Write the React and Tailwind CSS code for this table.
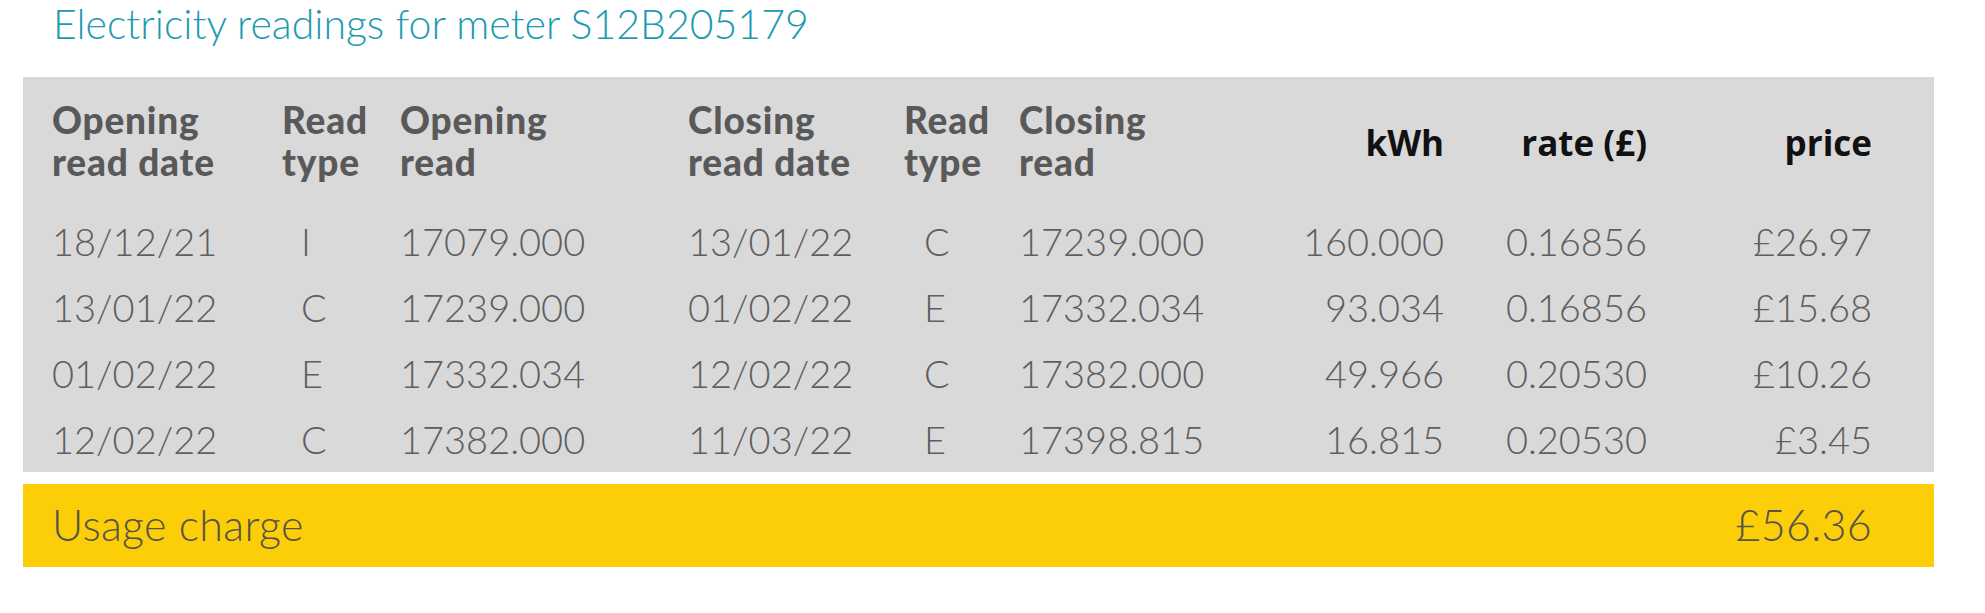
import React from "react";

const rows = [
  ["18/12/21", "I", "17079.000", "13/01/22", "C", "17239.000", "160.000", "0.16856", "£26.97"],
  ["13/01/22", "C", "17239.000", "01/02/22", "E", "17332.034", "93.034", "0.16856", "£15.68"],
  ["01/02/22", "E", "17332.034", "12/02/22", "C", "17382.000", "49.966", "0.20530", "£10.26"],
  ["12/02/22", "C", "17382.000", "11/03/22", "E", "17398.815", "16.815", "0.20530", "£3.45"],
];

const grid =
  "grid grid-cols-[230px_118px_288px_216px_115px_250px_175px_203px_225px]";

function Head({ l1, l2 }) {
  return (
    <div
      className="font-black text-[37px] leading-[42px] tracking-[0.8px] text-[#595959] whitespace-nowrap"
      style={{ fontFamily: "Lato, sans-serif" }}
    >
      <div>{l1}</div>
      <div>{l2}</div>
    </div>
  );
}

function RHead({ children }) {
  return (
    <div
      className="self-center pt-[4px] text-right font-bold text-[35px] text-[#111111]"
      style={{ fontFamily: "'Open Sans', sans-serif" }}
    >
      {children}
    </div>
  );
}

export default function App() {
  return (
    <div className="w-[1985px] h-[613px] bg-white" style={{ fontFamily: "Lato, sans-serif" }}>
      <div className="pl-[53px] text-[41px] leading-[48px] text-[#1d9ab2] font-light">
        Electricity readings for meter S12B205179
      </div>
      <div className="mt-[29px] ml-[23px] w-[1911px] h-[395px] bg-[#d9d9d9] pl-[29px] pr-[62px] pt-[22px]">
        <div className={grid}>
          <Head l1="Opening" l2="read date" />
          <Head l1="Read" l2="type" />
          <Head l1="Opening" l2="read" />
          <Head l1="Closing" l2="read date" />
          <Head l1="Read" l2="type" />
          <Head l1="Closing" l2="read" />
          <RHead>kWh</RHead>
          <RHead>rate (£)</RHead>
          <RHead>price</RHead>
        </div>
        <div className="mt-[25px]">
          {rows.map((r, i) => (
            <div key={i} className={`${grid} h-[66px] items-center text-[38px] leading-[66px] text-[#5e5e5e] font-light`}>
              <div>{r[0]}</div>
              <div className="pl-[19px]">{r[1]}</div>
              <div>{r[2]}</div>
              <div>{r[3]}</div>
              <div className="pl-[20px]">{r[4]}</div>
              <div>{r[5]}</div>
              <div className="text-right">{r[6]}</div>
              <div className="text-right">{r[7]}</div>
              <div className="text-right">{r[8]}</div>
            </div>
          ))}
        </div>
      </div>
      <div className="mt-[12px] ml-[23px] w-[1911px] h-[83px] bg-[#fbce07] pl-[29px] pr-[62px] flex items-center justify-between text-[43px] tracking-[0.3px] text-[#57534a] font-light">
        <span>Usage charge</span>
        <span>£56.36</span>
      </div>
    </div>
  );
}
